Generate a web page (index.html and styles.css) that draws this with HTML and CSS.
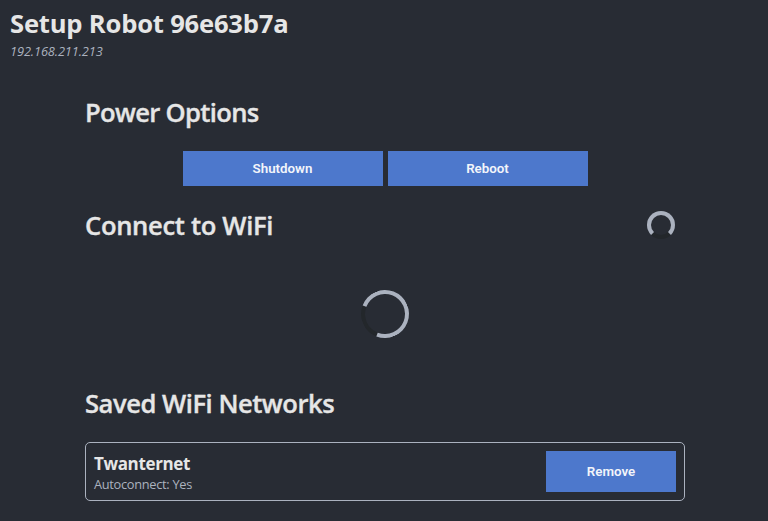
FILE: index.html
```html
<!DOCTYPE html>
<html lang="en">
<head>
<meta charset="utf-8">
<title>Setup Robot</title>
<link rel="stylesheet" href="styles.css">
</head>
<body>
<header class="page-header">
  <h1>Setup Robot 96e63b7a</h1>
  <p class="address">192.168.211.213</p>
</header>
<main class="content">
  <section class="power">
    <h2 class="power-title">Power Options</h2>
    <div class="power-buttons">
      <button class="button">Shutdown</button>
      <button class="button">Reboot</button>
    </div>
  </section>
  <section class="connect">
    <div class="connect-head">
      <h2 class="connect-title">Connect to WiFi</h2>
      <div class="spinner spinner-small"></div>
    </div>
    <div class="spinner spinner-large"></div>
  </section>
  <section class="saved">
    <h2 class="saved-title">Saved WiFi Networks</h2>
    <div class="network">
      <div class="network-info">
        <h3>Twanternet</h3>
        <p class="network-detail">Autoconnect: Yes</p>
      </div>
      <button class="button button-remove">Remove</button>
    </div>
  </section>
</main>
</body>
</html>
```
FILE: styles.css
```css
* { box-sizing: border-box; }
body {
  margin: 0;
  height: 521px;
  overflow: hidden;
  background: #282c34;
  color: #e6e6e6;
  font-family: "Open Sans", "Noto Sans", sans-serif;
}
h1, h2, h3, p { margin: 0; white-space: nowrap; }
.page-header { height: 95px; padding: 6px 10px 0; }
h1 { font-size: 25.6px; line-height: 36px; font-weight: 700; letter-spacing: -0.2px; }
.address { font-size: 12.8px; line-height: 18px; font-style: italic; color: #abb2bf; letter-spacing: -0.1px; }
.content { width: 600px; margin: 0 auto; position: relative; left: 1px; }
h2 { font-size: 25.6px; line-height: 36px; font-weight: 600; -webkit-text-stroke: 0.35px #e6e6e6; }
.power-title { letter-spacing: -0.68px; }
.connect-title { letter-spacing: -0.33px; }
.saved-title { letter-spacing: -0.48px; }
.power-buttons { display: flex; justify-content: center; gap: 5px; margin-top: 20px; }
.button {
  width: 200px;
  height: 35px;
  padding: 0;
  border: 0;
  background: #4d78cc;
  color: #f3f5fa;
  font: 600 13.33px Roboto, "Liberation Sans", Arial, sans-serif;
}
.connect { margin-top: 20px; height: 180px; }
.connect-head { display: flex; justify-content: space-between; padding: 2px 10px 0 0; }
.connect-head .spinner { margin-top: 3px; }
.spinner { border: 4px solid #abb2bf; border-bottom-color: #23272b; border-radius: 50%; }
.spinner-small { width: 28px; height: 28px; }
.spinner-large { width: 48px; height: 48px; margin: 46px auto 0; transform: rotate(66deg); }
.network {
  display: flex;
  justify-content: space-between;
  align-items: center;
  height: 59px;
  margin-top: 20px;
  padding: 0 8px;
  border: 1px solid #abb2bf;
  border-radius: 5px;
}
.network-info { padding-top: 2px; }
h3 { font-size: 17px; line-height: 22px; font-weight: 700; letter-spacing: -0.35px; }
.network-detail { font-size: 12.8px; line-height: 18px; color: #abb2bf; letter-spacing: -0.3px; }
.button-remove { width: 130px; height: 41px; }
```
